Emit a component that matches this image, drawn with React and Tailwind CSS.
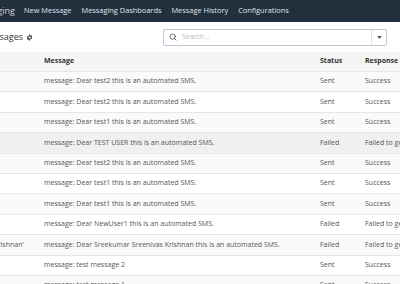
import React from 'react';
import { Search } from 'lucide-react';

const rows = [
    { lead: '', message: 'message: Dear test2 this is an automated SMS.', status: 'Sent', response: 'Success' },
    { lead: '', message: 'message: Dear test2 this is an automated SMS.', status: 'Sent', response: 'Success' },
    { lead: '', message: 'message: Dear test1 this is an automated SMS.', status: 'Sent', response: 'Success' },
    { lead: '', message: 'message: Dear TEST USER this is an automated SMS.', status: 'Failed', response: 'Failed to get response', hover: true },
    { lead: '', message: 'message: Dear test2 this is an automated SMS.', status: 'Sent', response: 'Success' },
    { lead: '', message: 'message: Dear test1 this is an automated SMS.', status: 'Sent', response: 'Success' },
    { lead: '', message: 'message: Dear test1 this is an automated SMS.', status: 'Sent', response: 'Success' },
    { lead: '', message: 'message: Dear NewUser1 this is an automated SMS.', status: 'Failed', response: 'Failed to get response' },
    { lead: "Sreekumar Sreenivas Krishnan'", message: 'message: Dear Sreekumar Sreenivas Krishnan this is an automated SMS.', status: 'Failed', response: 'Failed to get response' },
    { lead: '', message: 'message: test message 2', status: 'Sent', response: 'Success' },
    { lead: '', message: 'message: test message 1', status: 'Sent', response: 'Success' },
];

function Gear() {
    return (
        <svg viewBox="0 0 16 16" className="w-[7px] h-[7px] text-[#444]" fill="currentColor">
            <path d="M9.4 1l.3 1.7c.5.2 1 .5 1.4.8l1.6-.6 1.4 2.4-1.3 1.1c.1.5.1 1.1 0 1.6l1.3 1.1-1.4 2.4-1.6-.6c-.4.3-.9.6-1.4.8L9.4 15H6.6l-.3-1.7c-.5-.2-1-.5-1.4-.8l-1.6.6-1.4-2.4 1.3-1.1c-.1-.5-.1-1.1 0-1.6L1.9 6.9l1.4-2.4 1.6.6c.4-.3.9-.6 1.4-.8L6.6 1h2.8zM8 5.5a2.5 2.5 0 100 5 2.5 2.5 0 000-5z" />
        </svg>
    );
}

export default function App() {
    return (
        <div className="w-[400px] h-[284px] overflow-hidden bg-white font-['Open_Sans',sans-serif] text-[7px]">
            <div className="h-[22px] bg-[#22303d] flex items-center text-[#dfe5ea]">
                <div className="w-[15px] overflow-hidden flex justify-end whitespace-nowrap text-[9px] text-[#cfd6dc]">Messaging</div>
                <div className="flex gap-[10px] ml-[9px] text-[7.4px]">
                    <span>New Message</span>
                    <span>Messaging Dashboards</span>
                    <span>Message History</span>
                    <span>Configurations</span>
                </div>
            </div>

            <div className="h-[30px] flex items-center">
                <div className="w-[23px] overflow-hidden flex justify-end whitespace-nowrap text-[9px] text-[#333]">Messages</div>
                <div className="ml-[3px]"><Gear /></div>
                <div className="ml-[130px] w-[224px] h-[17px] border border-[#b9c9d8] rounded-[2px] flex items-center">
                    <Search className="w-[8px] h-[8px] ml-[5px] text-[#555]" strokeWidth={2.5} />
                    <span className="ml-[5px] text-[#bbb]">Search...</span>
                    <div className="ml-auto h-full w-[15px] border-l border-[#e3e3e3] flex items-center justify-center">
                        <svg viewBox="0 0 6 4" className="w-[5px] h-[3px] text-[#555]" fill="currentColor"><path d="M0 0h6L3 4z" /></svg>
                    </div>
                </div>
            </div>

            <div className="grid grid-cols-[38px_276px_45px_1fr] h-[20px] items-center bg-[#f5f5f5] border-b border-[#e6e6e6] font-bold text-[#333]">
                <div />
                <div className="px-[6px]">Message</div>
                <div className="px-[6px]">Status</div>
                <div className="px-[6px]">Response</div>
            </div>
            {rows.map((r, i) => (
                <div
                    key={i}
                    className={`grid grid-cols-[38px_276px_45px_1fr] h-[20.4px] items-center border-b border-[#e6e6e6] text-[#555] whitespace-nowrap ${r.hover ? 'bg-[#f0f0f0]' : i % 2 === 0 ? 'bg-[#fafafa]' : 'bg-white'}`}
                >
                    <div className="w-[24px] overflow-hidden flex justify-end">{r.lead}</div>
                    <div className="px-[6px] overflow-hidden">{r.message}</div>
                    <div className="px-[6px]">{r.status}</div>
                    <div className="px-[6px] overflow-hidden">{r.response}</div>
                </div>
            ))}
        </div>
    );
}
